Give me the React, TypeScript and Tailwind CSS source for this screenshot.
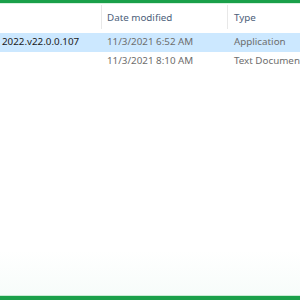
export default function App() {
  const font = { fontFamily: '"Segoe UI", "Noto Sans", "Open Sans", sans-serif' };
  return (
    <div className="w-[300px] h-[300px] bg-white flex flex-col overflow-hidden text-[9.8px]" style={font}>
      <div className="h-[3px] bg-[#1aa04a]" />
      <div className="h-[1px] bg-[#d8f2e0]" />
      <div className="flex h-[28px] items-center">
        <div className="w-[101px] h-full" />
        <div className="w-[1px] h-[24px] self-start mt-[1px] bg-[#e8e8e8]" />
        <div className="w-[125px] pl-[5px] text-[#4c607a]">Date modified</div>
        <div className="w-[1px] h-[24px] self-start mt-[1px] bg-[#e8e8e8]" />
        <div className="flex-1 pl-[6px] text-[#4c607a]">Type</div>
      </div>
      <div className="flex h-[19px] items-center bg-[#cce8ff] mt-[1px]">
        <div className="w-[102px] pl-[2px] text-[#1a1a1a] whitespace-nowrap">2022.v22.0.0.107</div>
        <div className="w-[126px] pl-[5px] text-[#6d6d6d] whitespace-nowrap">11/3/2021 6:52 AM</div>
        <div className="flex-1 pl-[6px] text-[#6d6d6d] whitespace-nowrap">Application</div>
      </div>
      <div className="flex h-[19px] items-center">
        <div className="w-[102px]" />
        <div className="w-[126px] pl-[5px] text-[#6d6d6d] whitespace-nowrap">11/3/2021 8:10 AM</div>
        <div className="flex-1 pl-[6px] text-[#6d6d6d] whitespace-nowrap overflow-hidden">Text Document</div>
      </div>
      <div className="flex-1 bg-gradient-to-b from-white from-80% to-[#f7fcfa]" />
      <div className="h-[1px] bg-[#c8ecd4]" />
      <div className="h-[4px] bg-[#1aa04a]" />
    </div>
  );
}
